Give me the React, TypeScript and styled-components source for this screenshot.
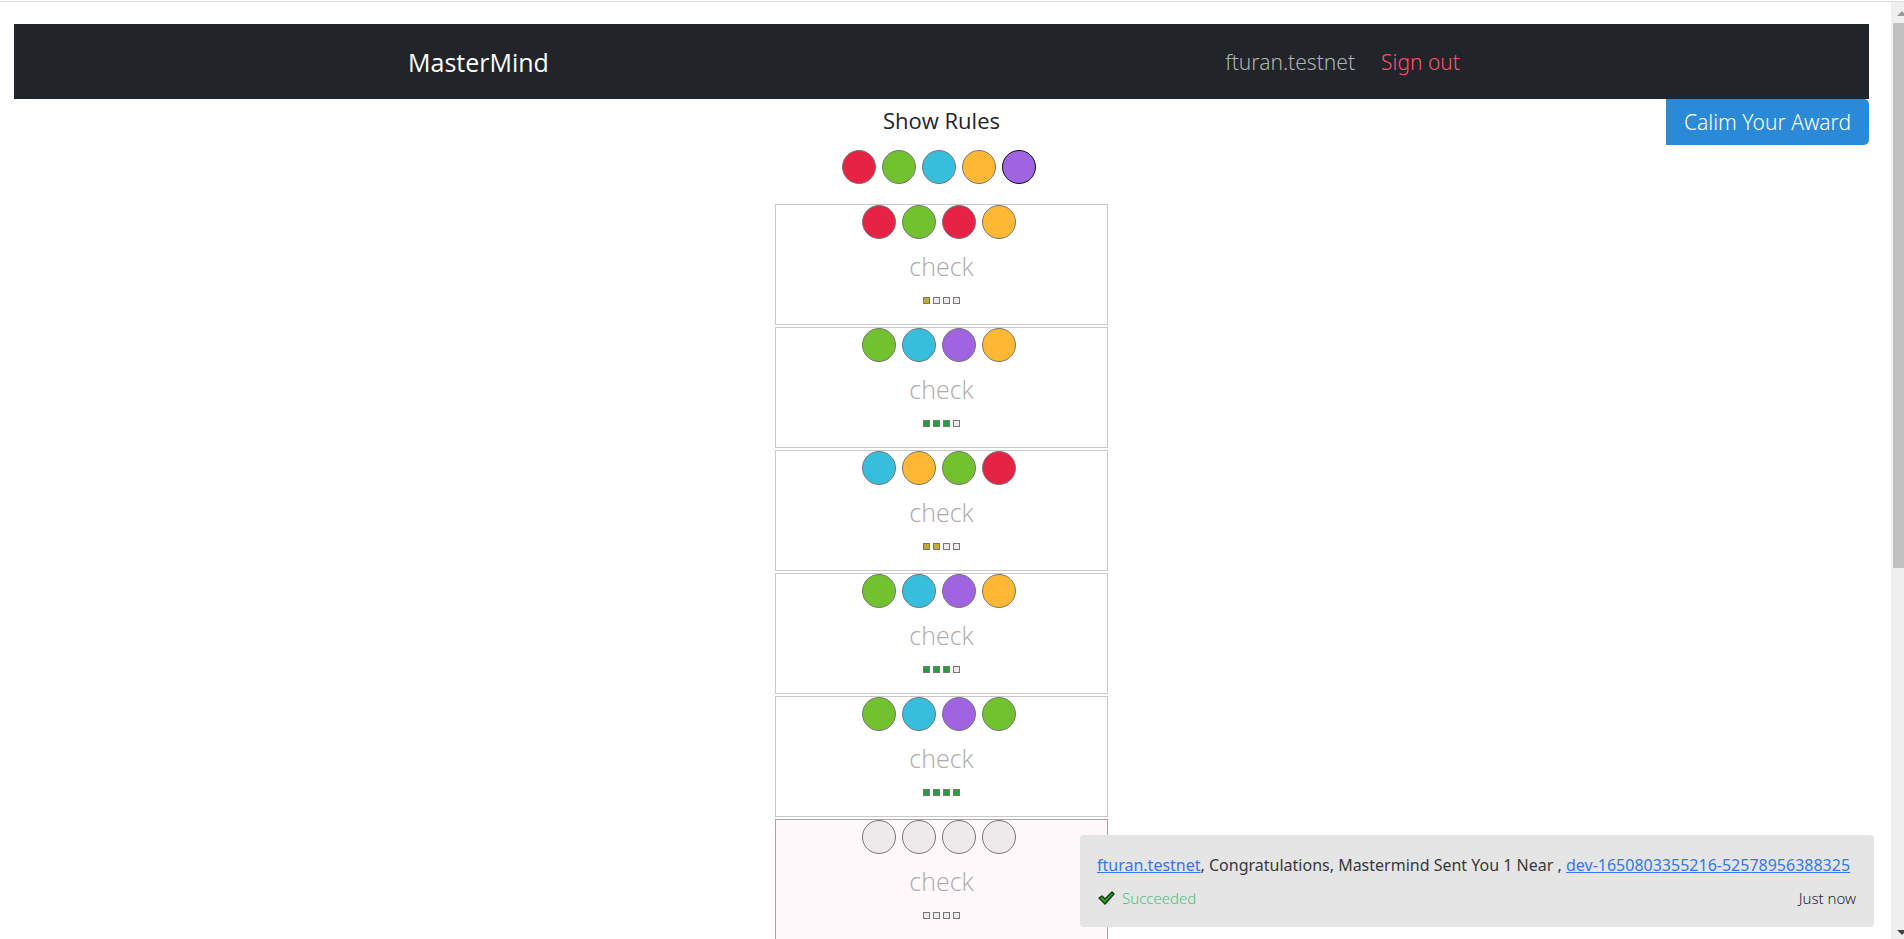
import React from "react";
import styled, { createGlobalStyle } from "styled-components";

const GlobalStyle = createGlobalStyle`
  *, *::before, *::after { box-sizing: border-box; }
  body {
    margin: 0;
    background: #fff;
    color: #212529;
    font-family: "Open Sans", "Noto Sans", sans-serif;
    font-weight: 400;
    overflow: hidden;
  }
  button { font: inherit; color: inherit; margin: 0; padding: 0; border: 0; background: none; cursor: pointer; }
`;

const peg = {
  red: "#e62245",
  green: "#72c12f",
  blue: "#37bedc",
  orange: "#ffb833",
  purple: "#a064e0",
  empty: "#eeeaeb",
};
type Color = keyof typeof peg;

const mark = { near: "#c8ab2c", hit: "#22a03a", none: "#efe9ec" };
type Mark = keyof typeof mark;

const Shell = styled.div`
  display: flex;
  height: 100vh;
  border-top: 1px solid #fff;
  box-shadow: inset 0 1px 0 #d9dcdb;
`;

const Page = styled.div`
  flex: 1;
  min-width: 0;
  overflow: hidden;
  padding: 23px 22px 0 14px;
`;

const Header = styled.header`
  background: #212429;
  height: 75px;
  display: flex;
  align-items: center;
  justify-content: center;
`;

const HeaderInner = styled.div`
  width: 100%;
  max-width: 1067px;
  display: flex;
  align-items: center;
  justify-content: space-between;
`;

const Brand = styled.a`
  color: #fff;
  font-size: 25px;
  line-height: 36px;
  text-decoration: none;
`;

const Nav = styled.nav`
  display: flex;
  gap: 26px;
  padding-right: 15px;
  font-family: "Noto Sans", "Open Sans", sans-serif;
  font-size: 21px;
  font-weight: 300;
  line-height: 32px;
`;

const Account = styled.span`
  color: #b0b1b3;
`;

const SignOut = styled.button`
  color: #ff5566;
`;

const Board = styled.main`
  display: grid;
  grid-template-columns: 1fr 333px 1fr;
  align-items: start;
`;

const Game = styled.section`
  grid-column: 2;
  display: flex;
  flex-direction: column;
  align-items: center;
`;

const Award = styled.button`
  && {
    grid-column: 3;
    justify-self: end;
    width: 203px;
    height: 46px;
    background: #2b8ad8;
    color: #fff;
    border-radius: 0 5px 5px 0;
    font-family: "Noto Sans", "Open Sans", sans-serif;
    font-size: 21px;
    font-weight: 300;
    line-height: 32px;
  }
`;

const RulesButton = styled.button`
  && {
    margin-top: 5px;
    font-size: 22px;
    line-height: 32px;
  }
`;

const PegRow = styled.div`
  display: flex;
  gap: 6px;
  margin-right: 5px;
`;

const Palette = styled(PegRow)`
  margin-top: 14px;
  margin-right: 6px;
  margin-bottom: 20px;
`;

const Peg = styled.button<{ $color: Color; $selected?: boolean }>`
  && {
    width: 34px;
    height: 34px;
    border-radius: 50%;
    border: 1px solid ${(p) => (p.$selected ? "#111" : "#777")};
    background: ${(p) => peg[p.$color]};
  }
`;

const Guesses = styled.ol`
  list-style: none;
  margin: 0;
  padding: 0;
  width: 100%;
  display: flex;
  flex-direction: column;
  gap: 2px;
`;

const Guess = styled.li<{ $active: boolean }>`
  height: 121px;
  border: 1px solid ${(p) => (p.$active ? "#aaa4a6" : "#c8c8c8")};
  background: ${(p) => (p.$active ? "#fff9fb" : "#fff")};
  display: flex;
  flex-direction: column;
  align-items: center;
`;

const Check = styled.button`
  && {
    margin-top: 9px;
    font-size: 25px;
    font-weight: 300;
    line-height: 36px;
    color: #b0a8aa;
  }
`;

const Marks = styled.div`
  display: flex;
  gap: 3px;
  margin-top: 13px;
`;

const MarkBox = styled.span<{ $mark: Mark }>`
  width: 7px;
  height: 7px;
  border: 1px solid #777;
  background: ${(p) => mark[p.$mark]};
`;

const Toast = styled.aside`
  position: fixed;
  right: 30px;
  bottom: 12px;
  width: 794px;
  height: 92px;
  padding: 18px 18px 0 17px;
  border-radius: 4px;
  background: #e5e5e5;
  font-family: "Noto Sans", "Open Sans", sans-serif;
  font-size: 16px;
  line-height: 24px;
`;

const Message = styled.p`
  margin: 0;
  color: #36393c;
  white-space: nowrap;
`;

const Link = styled.a`
  color: #3478ea;
`;

const Status = styled.div`
  display: flex;
  justify-content: space-between;
  margin-top: 10px;
  font-size: 15px;
  font-weight: 300;
  line-height: 22px;
`;

const Succeeded = styled.span`
  display: flex;
  align-items: center;
  gap: 6px;
  color: #4fbd80;
`;

const ScrollTrack = styled.div`
  width: 13px;
  margin-top: 1px;
  flex: none;
  overflow: hidden;
  background: #f0f0f0;
  display: flex;
  flex-direction: column;
  padding-left: 2px;
`;

const ScrollThumb = styled.div`
  height: 58vh;
  background: #c0c0c0;
  margin-bottom: auto;
`;

const Arrow = styled.svg`
  display: block;
  width: 15px;
  height: 21px;
  flex: none;
`;

const guesses: { pegs: Color[]; marks: Mark[]; active?: boolean }[] = [
  { pegs: ["red", "green", "red", "orange"], marks: ["near", "none", "none", "none"] },
  { pegs: ["green", "blue", "purple", "orange"], marks: ["hit", "hit", "hit", "none"] },
  { pegs: ["blue", "orange", "green", "red"], marks: ["near", "near", "none", "none"] },
  { pegs: ["green", "blue", "purple", "orange"], marks: ["hit", "hit", "hit", "none"] },
  { pegs: ["green", "blue", "purple", "green"], marks: ["hit", "hit", "hit", "hit"] },
  { pegs: ["empty", "empty", "empty", "empty"], marks: ["none", "none", "none", "none"], active: true },
];

const palette: Color[] = ["red", "green", "blue", "orange", "purple"];

export default function App() {
  return (
    <Shell>
      <GlobalStyle />
      <Page>
        <Header>
          <HeaderInner>
            <Brand href="#">MasterMind</Brand>
            <Nav>
              <Account>fturan.testnet</Account>
              <SignOut>Sign out</SignOut>
            </Nav>
          </HeaderInner>
        </Header>
        <Board>
          <Game>
            <RulesButton>Show Rules</RulesButton>
            <Palette>
              {palette.map((c) => (
                <Peg key={c} $color={c} $selected={c === "purple"} aria-label={c} />
              ))}
            </Palette>
            <Guesses>
              {guesses.map((g, i) => (
                <Guess key={i} $active={!!g.active}>
                  <PegRow>
                    {g.pegs.map((c, j) => (
                      <Peg key={j} $color={c} aria-label={c} />
                    ))}
                  </PegRow>
                  <Check>check</Check>
                  <Marks>
                    {g.marks.map((m, j) => (
                      <MarkBox key={j} $mark={m} />
                    ))}
                  </Marks>
                </Guess>
              ))}
            </Guesses>
          </Game>
          <Award>Calim Your Award</Award>
        </Board>
      </Page>
      <ScrollTrack aria-hidden="true">
        <Arrow viewBox="0 0 15 21">
          <path d="M4 14 L9 9 L14 14 Z" fill="#9a9a9a" />
        </Arrow>
        <ScrollThumb />
        <Arrow viewBox="0 0 15 21">
          <path d="M4 12 L14 12 L9 17 Z" fill="#444" />
        </Arrow>
      </ScrollTrack>
      <Toast role="status">
        <Message>
          <Link href="#">fturan.testnet</Link>, Congratulations, Mastermind Sent You 1 Near ,{" "}
          <Link href="#">dev-1650803355216-52578956388325</Link>
        </Message>
        <Status>
          <Succeeded>
            <svg width="19" height="16" viewBox="0 0 19 16" aria-hidden="true">
              <path
                d="M2 8 L5 6 L8 9 L15 2 L17 4 L8 14 Z"
                fill="#31a82a"
                stroke="#0c3a0c"
                strokeWidth="1.4"
                strokeLinejoin="round"
              />
            </svg>
            Succeeded
          </Succeeded>
          <span>Just now</span>
        </Status>
      </Toast>
    </Shell>
  );
}
